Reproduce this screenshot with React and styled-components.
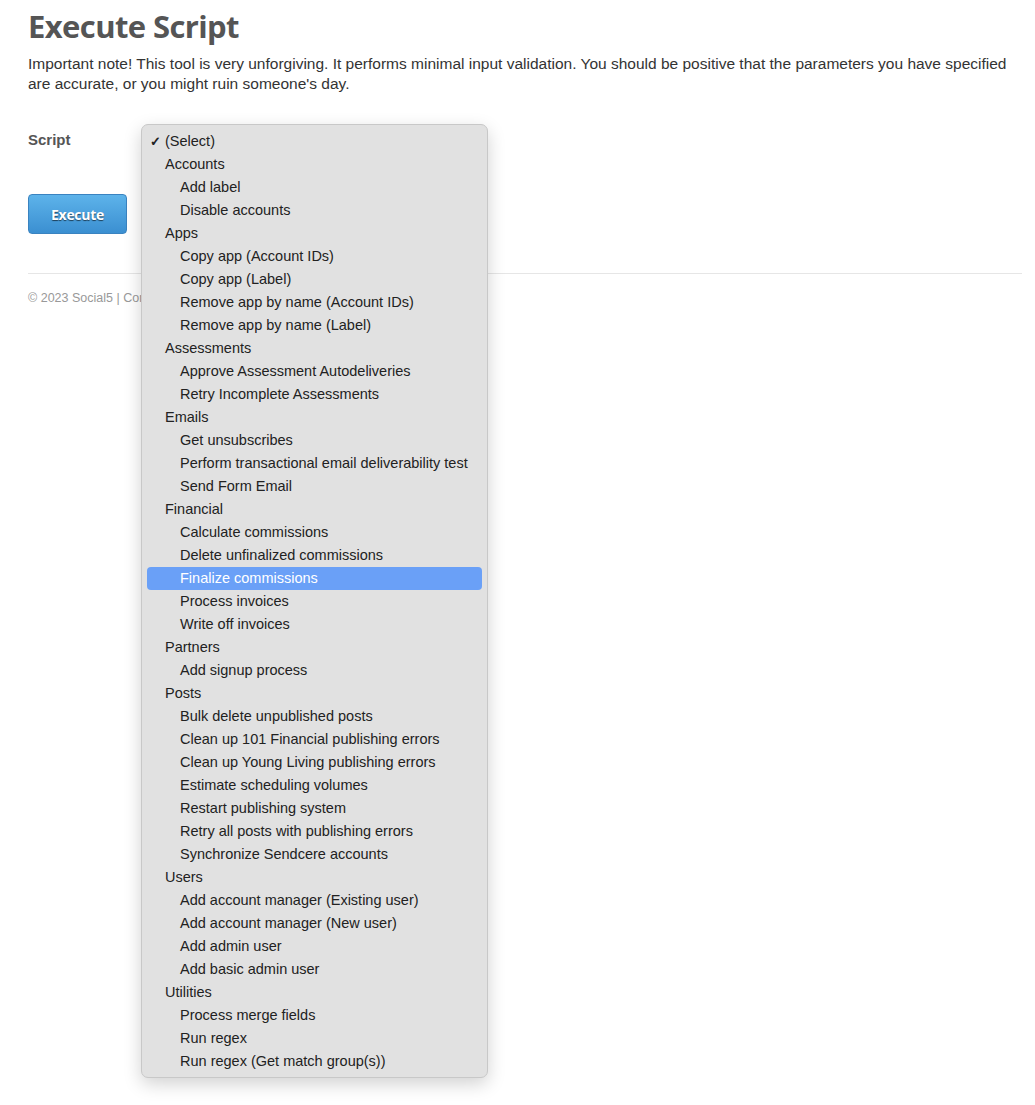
import React from "react";
import styled, { createGlobalStyle } from "styled-components";

const Global = createGlobalStyle`
  html, body { margin: 0; padding: 0; background: #fff; }
  body { font-family: "Liberation Sans", Arial, sans-serif; color: #333; }
`;

const Page = styled.div`
  position: relative;
  padding: 6px 13px 0 28px;
  min-height: 1105px;
  box-sizing: border-box;
`;

const Title = styled.h1`
  margin: 0;
  font-family: "Open Sans", sans-serif;
  font-weight: 700;
  font-size: 31px;
  line-height: 40px;
  letter-spacing: -0.6px;
  color: #555;
`;

const Note = styled.p`
  margin: 8px 0 0;
  font-size: 15.5px;
  line-height: 20px;
  color: #333;
`;

const FormRow = styled.div`
  display: flex;
  align-items: center;
  margin-top: 33px;
  height: 24px;
`;

const Label = styled.label`
  width: 113px;
  font-size: 15px;
  font-weight: 700;
  color: #555;
`;

const ButtonRow = styled.div`
  margin-top: 43px;
`;

const Button = styled.button`
  width: 99px;
  height: 40px;
  border: 1px solid #3a83c0;
  border-radius: 4px;
  background: linear-gradient(#5db3ea, #3b8fd1);
  color: #fff;
  font-family: "Open Sans", sans-serif;
  font-weight: 700;
  font-size: 14px;
  letter-spacing: -0.3px;
  text-shadow: 0 1px 1px rgba(0, 0, 0, 0.6);
  cursor: pointer;
`;

const Rule = styled.hr`
  margin: 39px 0 0;
  border: 0;
  border-top: 1px solid #e6e6e6;
`;

const Footer = styled.div`
  margin-top: 17px;
  font-size: 12.5px;
  color: #999;
`;

const Menu = styled.div`
  position: absolute;
  left: 141px;
  top: 124px;
  width: 347px;
  box-sizing: border-box;
  padding: 5px 5px 4px;
  background: #e1e1e1;
  border: 1px solid #c8c8c8;
  border-radius: 7px;
  box-shadow: 0 6px 18px rgba(0, 0, 0, 0.18);
  font-family: "Liberation Sans", Arial, sans-serif;
  font-size: 14.5px;
  color: #222;
`;

const Item = styled.div`
  position: relative;
  height: 23px;
  line-height: 23px;
  padding-left: ${(p) => (p.$group ? 18 : 33)}px;
  border-radius: 4px;
  white-space: nowrap;
  background: ${(p) => (p.$active ? "#6aa0f7" : "transparent")};
  color: ${(p) => (p.$active ? "#fff" : "#222")};
`;

const Check = styled.span`
  position: absolute;
  left: 3px;
  top: 0;
  font-size: 13px;
  font-weight: 700;
`;

const groups = [
  ["Accounts", ["Add label", "Disable accounts"]],
  ["Apps", ["Copy app (Account IDs)", "Copy app (Label)", "Remove app by name (Account IDs)", "Remove app by name (Label)"]],
  ["Assessments", ["Approve Assessment Autodeliveries", "Retry Incomplete Assessments"]],
  ["Emails", ["Get unsubscribes", "Perform transactional email deliverability test", "Send Form Email"]],
  ["Financial", ["Calculate commissions", "Delete unfinalized commissions", "Finalize commissions", "Process invoices", "Write off invoices"]],
  ["Partners", ["Add signup process"]],
  ["Posts", ["Bulk delete unpublished posts", "Clean up 101 Financial publishing errors", "Clean up Young Living publishing errors", "Estimate scheduling volumes", "Restart publishing system", "Retry all posts with publishing errors", "Synchronize Sendcere accounts"]],
  ["Users", ["Add account manager (Existing user)", "Add account manager (New user)", "Add admin user", "Add basic admin user"]],
  ["Utilities", ["Process merge fields", "Run regex", "Run regex (Get match group(s))"]],
];

export default function App() {
  return (
    <>
      <Global />
      <Page>
        <Title>Execute Script</Title>
        <Note>
          Important note! This tool is very unforgiving. It performs minimal input validation. You should be positive that the parameters you have specified are accurate, or you might ruin someone's day.
        </Note>
        <FormRow>
          <Label>Script</Label>
        </FormRow>
        <ButtonRow>
          <Button>Execute</Button>
        </ButtonRow>
        <Rule />
        <Footer>© 2023 Social5 | Contact Us</Footer>
        <Menu>
          <Item $group>
            <Check>✓</Check>(Select)
          </Item>
          {groups.map(([g, items]) => (
            <React.Fragment key={g}>
              <Item $group>{g}</Item>
              {items.map((it) => (
                <Item key={it} $active={it === "Finalize commissions"}>
                  {it}
                </Item>
              ))}
            </React.Fragment>
          ))}
        </Menu>
      </Page>
    </>
  );
}
